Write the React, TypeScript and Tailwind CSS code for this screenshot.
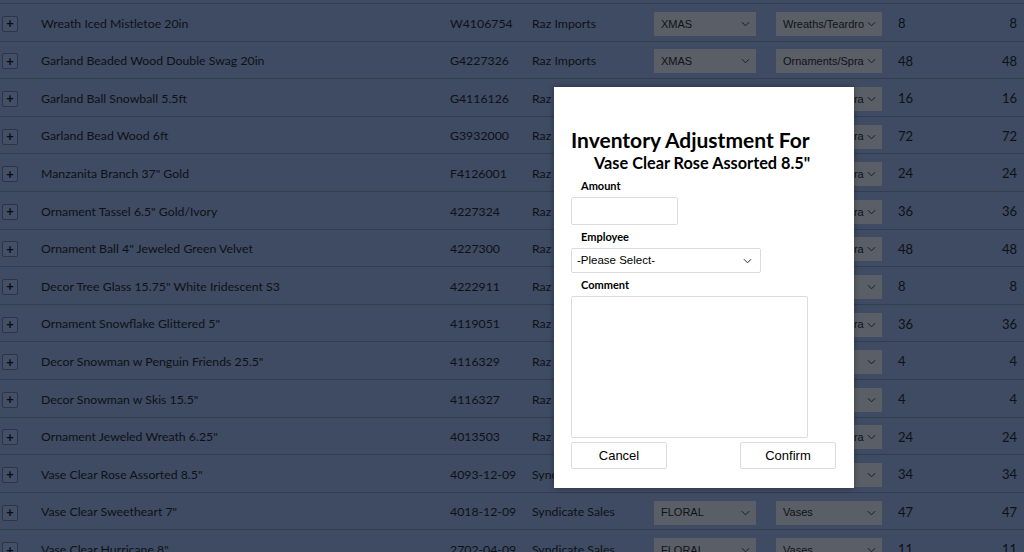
import React from "react";

type Row = {
  name: string;
  sku: string;
  vendor: string;
  dept: string;
  cat: string;
  q1: string;
  q2: string;
};

const rows: Row[] = [
  { name: "Wreath Iced Mistletoe 20in", sku: "W4106754", vendor: "Raz Imports", dept: "XMAS", cat: "Wreaths/Teardro", q1: "8", q2: "8" },
  { name: "Garland Beaded Wood Double Swag 20in", sku: "G4227326", vendor: "Raz Imports", dept: "XMAS", cat: "Ornaments/Spra", q1: "48", q2: "48" },
  { name: "Garland Ball Snowball 5.5ft", sku: "G4116126", vendor: "Raz Imports", dept: "XMAS", cat: "Ornaments/Spra", q1: "16", q2: "16" },
  { name: "Garland Bead Wood 6ft", sku: "G3932000", vendor: "Raz Imports", dept: "XMAS", cat: "Ornaments/Spra", q1: "72", q2: "72" },
  { name: "Manzanita Branch 37\" Gold", sku: "F4126001", vendor: "Raz Imports", dept: "XMAS", cat: "Ornaments/Spra", q1: "24", q2: "24" },
  { name: "Ornament Tassel 6.5\" Gold/Ivory", sku: "4227324", vendor: "Raz Imports", dept: "XMAS", cat: "Ornaments/Spra", q1: "36", q2: "36" },
  { name: "Ornament Ball 4\" Jeweled Green Velvet", sku: "4227300", vendor: "Raz Imports", dept: "XMAS", cat: "Ornaments/Spra", q1: "48", q2: "48" },
  { name: "Decor Tree Glass 15.75\" White Iridescent S3", sku: "4222911", vendor: "Raz Imports", dept: "XMAS", cat: "Trees", q1: "8", q2: "8" },
  { name: "Ornament Snowflake Glittered 5\"", sku: "4119051", vendor: "Raz Imports", dept: "XMAS", cat: "Ornaments/Spra", q1: "36", q2: "36" },
  { name: "Decor Snowman w Penguin Friends 25.5\"", sku: "4116329", vendor: "Raz Imports", dept: "XMAS", cat: "Figurines", q1: "4", q2: "4" },
  { name: "Decor Snowman w Skis 15.5\"", sku: "4116327", vendor: "Raz Imports", dept: "XMAS", cat: "Figurines", q1: "4", q2: "4" },
  { name: "Ornament Jeweled Wreath 6.25\"", sku: "4013503", vendor: "Raz Imports", dept: "XMAS", cat: "Ornaments/Spra", q1: "24", q2: "24" },
  { name: "Vase Clear Rose Assorted 8.5\"", sku: "4093-12-09", vendor: "Syndicate Sales", dept: "FLORAL", cat: "Vases", q1: "34", q2: "34" },
  { name: "Vase Clear Sweetheart 7\"", sku: "4018-12-09", vendor: "Syndicate Sales", dept: "FLORAL", cat: "Vases", q1: "47", q2: "47" },
  { name: "Vase Clear Hurricane 8\"", sku: "2702-04-09", vendor: "Syndicate Sales", dept: "FLORAL", cat: "Vases", q1: "11", q2: "11" },
];

function Chevron({ className }: { className?: string }) {
  return (
    <svg viewBox="0 0 10 6" className={className} fill="none" stroke="currentColor" strokeWidth="1.1">
      <polyline points="1,1 5,5 9,1" />
    </svg>
  );
}

function FakeSelect({ text, width }: { text: string; width: string }) {
  return (
    <div
      className={`${width} h-[24px] bg-[#5a5e66] flex items-center pl-[7px] pr-[6px] text-[11px] text-[#101216] overflow-hidden`}
      style={{ fontFamily: '"Liberation Sans", Arial, sans-serif' }}
    >
      <span className="flex-1 whitespace-nowrap overflow-hidden">{text}</span>
      <Chevron className="w-[9px] h-[6px] text-[#1a1c20] shrink-0 ml-[2px]" />
    </div>
  );
}

export default function App() {
  return (
    <div
      className="relative w-[1024px] h-[552px] overflow-hidden bg-[#3e4b62] text-[#0e1116]"
      style={{ fontFamily: 'Lato, "Open Sans", sans-serif' }}
    >
      <div className="h-[4px] border-b border-[#323d50]" />
      {rows.map((r, i) => (
        <div key={i} className="flex items-center h-[37.6px] pt-[3px] border-b border-[#323d50] text-[12.3px]">
          <div className="w-[41px] pl-[2px] flex items-center">
            <div className="w-[16px] h-[16px] border border-[#2c3546] bg-[#434f66] rounded-[2px] flex items-center justify-center text-[13px] font-bold leading-none text-[#0b0d11]">
              +
            </div>
          </div>
          <div className="w-[409px] whitespace-nowrap">{r.name}</div>
          <div className="w-[82px] whitespace-nowrap">{r.sku}</div>
          <div className="w-[122px] whitespace-nowrap">{r.vendor}</div>
          <div className="w-[122px]">
            <FakeSelect text={r.dept} width="w-[102px]" />
          </div>
          <div className="w-[122px]">
            <FakeSelect text={r.cat} width="w-[106px]" />
          </div>
          <div className="flex-1 text-[13px]">{r.q1}</div>
          <div className="pr-[7px] text-right text-[13px]">{r.q2}</div>
        </div>
      ))}

      {/* Modal */}
      <div className="absolute left-[554px] top-[87px] w-[300px] h-[401px] bg-white shadow-[0_0_6px_rgba(0,0,0,0.35)] pl-[17px] pr-[18px] pt-[40px] text-black">
        <div className="text-[21px] font-bold leading-[26px] whitespace-nowrap">Inventory Adjustment For</div>
        <div className="text-[16.3px] font-bold leading-[20px] whitespace-nowrap pl-[23px]">Vase Clear Rose Assorted 8.5"</div>
        <div className="text-[11px] font-bold pl-[10px] mt-[6px] leading-[14px]">Amount</div>
        <div className="mt-[4px] w-[107px] h-[28px] border border-[#dcdcdc] rounded-[2px]" />
        <div className="text-[11px] font-bold pl-[10px] mt-[5px] leading-[14px]">Employee</div>
        <div
          className="mt-[4px] w-[190px] h-[25px] border border-[#dcdcdc] rounded-[2px] flex items-center pl-[5px] pr-[8px] text-[11.5px]"
          style={{ fontFamily: '"Liberation Sans", Arial, sans-serif' }}
        >
          <span className="flex-1">-Please Select-</span>
          <Chevron className="w-[9px] h-[6px] text-[#333]" />
        </div>
        <div className="text-[11px] font-bold pl-[10px] mt-[5px] leading-[14px]">Comment</div>
        <div className="mt-[4px] w-[237px] h-[142px] border border-[#dcdcdc] rounded-[2px]" />
        <div
          className="mt-[4px] flex justify-between text-[13px]"
          style={{ fontFamily: '"Liberation Sans", Arial, sans-serif' }}
        >
          <div className="w-[96px] h-[27px] border border-[#dcdcdc] rounded-[2px] flex items-center justify-center">Cancel</div>
          <div className="w-[96px] h-[27px] border border-[#dcdcdc] rounded-[2px] flex items-center justify-center">Confirm</div>
        </div>
      </div>
    </div>
  );
}
